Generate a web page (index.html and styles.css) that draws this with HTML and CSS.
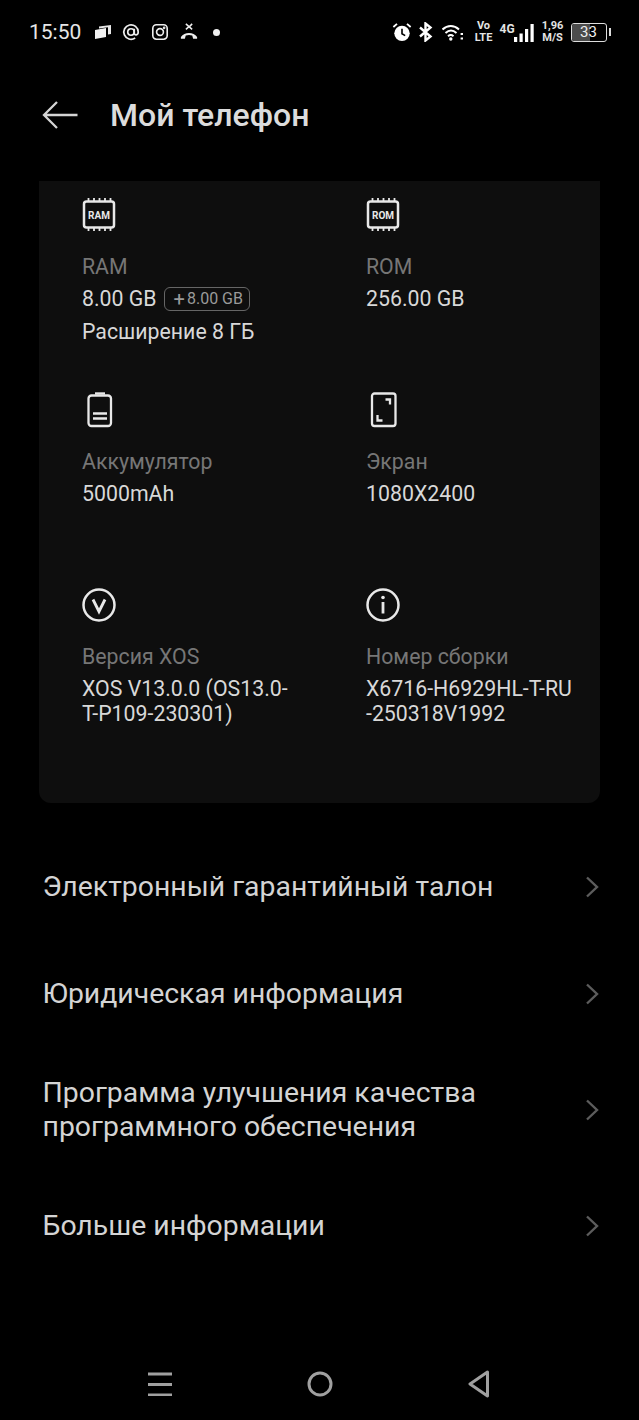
FILE: index.html
```html
<!DOCTYPE html>
<html lang="ru">
<head>
<meta charset="utf-8">
<title>Мой телефон</title>
<link rel="stylesheet" href="styles.css">
</head>
<body>
<div class="page">
  <div class="status">
    <div class="status-left">
      <span class="time">15:50</span>
      <svg class="ic-cards" viewBox="0 0 18 16"><path d="M1 6l11-2v9l-11 2z" fill="#f2f2f2"/><path d="M5 2.500l12-1.600v9l-3 .5V3.200l-9 1.200z" fill="#e8e8e8"/></svg>
      <svg class="ic-s" viewBox="0 0 20 20" fill="none" stroke="#eee" stroke-width="1.900"><circle cx="10" cy="10" r="3.600"/><path d="M13.600 6.400v5c0 2.600 4.400 2.600 4.400-1.400a8 8 0 1 0-3.400 6.600"/></svg>
      <svg class="ic-s" viewBox="0 0 20 20" fill="none" stroke="#eee" stroke-width="1.800"><rect x="2" y="2" width="16" height="16" rx="4"/><circle cx="10" cy="10" r="3.800"/><circle cx="14.600" cy="5.400" r=".6" fill="#eee"/></svg>
      <svg class="ic-s" viewBox="0 0 20 20" fill="none" stroke="#eee"><path d="M6.500 1l7 6M13.500 1l-3 3" stroke-width="1.700"/><path d="M6.500 7l3.500-3" stroke-width="1.700"/><path d="M1 15.500c4-6 14-6 18 0v2h-4.400l-1-3.500c-2.400-.8-4.800-.8-7.200 0l-1 3.500H1z" fill="#eee" stroke="none"/></svg>
      <span class="dot"></span>
    </div>
    <div class="status-right">
      <svg class="ic-alarm" viewBox="0 0 22 22"><path d="M1.500 5.500L5.500 2M20.500 5.500L16.500 2" stroke="#fff" stroke-width="2" fill="none"/><circle cx="11" cy="12.500" r="8.500" fill="#fff"/><path d="M11 7.500v5.500l3.500 2" stroke="#000" stroke-width="1.800" fill="none"/></svg>
      <svg class="ic-bt" viewBox="0 0 15 20" fill="none" stroke="#fff" stroke-width="2.400"><path d="M2 5.500l10.500 9L7.500 18.500v-17l5 4-10.500 9"/></svg>
      <svg class="ic-wifi" viewBox="0 0 21 18" fill="none" stroke="#fff" stroke-width="2"><path d="M.5 6.500c5-4.600 11.500-4.600 16.500 0M3.500 10c3.400-3 7.600-3 11 0M6 13.200c1.800-1.500 3.700-1.500 5.500 0"/><circle cx="8.800" cy="16" r="1.700" fill="#fff" stroke="none"/><path d="M19.800 10v2M19.800 14.500v2" stroke-width="2.400"/></svg>
      <span class="mini volte"><span class="mini-line">Vo</span><span class="mini-line">LTE</span></span>
      <span class="signal">
        <span class="mini g4">4G</span>
        <svg class="ic-bars" viewBox="0 0 20 18" fill="#fff"><rect x="0" y="13" width="3.200" height="5"/><rect x="5.500" y="9.500" width="3.200" height="8.500"/><rect x="11" y="5" width="3.200" height="13"/><rect x="16.500" y="0" width="3.200" height="18"/></svg>
      </span>
      <span class="mini speed"><span class="mini-line">1,96</span><span class="mini-line">M/S</span></span>
      <span class="battery"><span class="batt-body"><span class="batt-fill"></span><span class="batt-num">33</span></span><span class="batt-tip"></span></span>
    </div>
  </div>

  <header class="head">
    <svg class="back" viewBox="0 0 36 30" fill="none" stroke="#d4d4d4" stroke-width="2.300"><path d="M35.500 15H3M15 2L2 15l13 13"/></svg>
    <h1 class="title">Мой телефон</h1>
  </header>

  <section class="card">
    <div class="spec">
      <svg class="icon" viewBox="0 0 36 36" fill="none" stroke="#e8e8e8"><rect x="3" y="4.500" width="30" height="26" rx="2.500" stroke-width="2.500"/><path d="M7.500 1v3M13 1v3M18.500 1v3M24 1v3M29.500 1v3M7.500 31v3M13 31v3M18.500 31v3M24 31v3M29.500 31v3" stroke-width="1.800"/><text x="18" y="21.500" class="chip">RAM</text></svg>
      <div class="label">RAM</div>
      <div class="value value-row"><span>8.00 GB</span><span class="tag"><span class="plus">+</span>8.00 GB</span></div>
      <div class="value ext">Расширение 8 ГБ</div>
    </div>
    <div class="spec">
      <svg class="icon" viewBox="0 0 36 36" fill="none" stroke="#e8e8e8"><rect x="3" y="4.500" width="30" height="26" rx="2.500" stroke-width="2.500"/><path d="M7.500 1v3M13 1v3M18.500 1v3M24 1v3M29.500 1v3M7.500 31v3M13 31v3M18.500 31v3M24 31v3M29.500 31v3" stroke-width="1.800"/><text x="18" y="21.500" class="chip">ROM</text></svg>
      <div class="label">ROM</div>
      <div class="value">256.00 GB</div>
    </div>
    <div class="spec">
      <svg class="icon" viewBox="0 0 36 36" fill="none" stroke="#e8e8e8"><rect x="7.500" y="3.500" width="22.500" height="30.500" rx="3" stroke-width="2.300"/><path d="M14 1.500h10" stroke-width="2.400"/><path d="M12 21.500h14M12 26.500h14" stroke-width="2.300"/></svg>
      <div class="label">Аккумулятор</div>
      <div class="value">5000mAh</div>
    </div>
    <div class="spec">
      <svg class="icon" viewBox="0 0 36 36" fill="none" stroke="#e8e8e8" stroke-width="2.300"><rect x="7" y="1.500" width="23.500" height="32.500" rx="2.500"/><path d="M20.500 7.500h4.500v5M12.500 23v5.500h5"/></svg>
      <div class="label">Экран</div>
      <div class="value">1080X2400</div>
    </div>
    <div class="spec">
      <svg class="icon" viewBox="0 0 36 36" fill="none" stroke="#e8e8e8" stroke-width="2.500"><circle cx="18" cy="18" r="15.500"/><path d="M12 12.500l6 12 6-12" stroke-width="2.800"/></svg>
      <div class="label">Версия XOS</div>
      <div class="value lines">XOS V13.0.0 (OS13.0-<br>T-P109-230301)</div>
    </div>
    <div class="spec">
      <svg class="icon" viewBox="0 0 36 36" fill="none" stroke="#e8e8e8" stroke-width="2.500"><circle cx="18" cy="18" r="15.500"/><path d="M18 15v11.500" stroke-width="2.800"/><circle cx="18" cy="10.500" r="1.800" fill="#e8e8e8" stroke="none"/></svg>
      <div class="label">Номер сборки</div>
      <div class="value lines">X6716-H6929HL-T-RU<br>-250318V1992</div>
    </div>
  </section>

  <nav class="menu">
    <a class="row r1"><span>Электронный гарантийный талон</span><svg class="chev" viewBox="0 0 14 22" fill="none" stroke="#5c5c5c" stroke-width="2.400"><path d="M2 1.500L12 11 2 20.500"/></svg></a>
    <a class="row r2"><span>Юридическая информация</span><svg class="chev" viewBox="0 0 14 22" fill="none" stroke="#5c5c5c" stroke-width="2.400"><path d="M2 1.500L12 11 2 20.500"/></svg></a>
    <a class="row r3"><span>Программа улучшения качества<br>программного обеспечения</span><svg class="chev" viewBox="0 0 14 22" fill="none" stroke="#5c5c5c" stroke-width="2.400"><path d="M2 1.500L12 11 2 20.500"/></svg></a>
    <a class="row r4"><span>Больше информации</span><svg class="chev" viewBox="0 0 14 22" fill="none" stroke="#5c5c5c" stroke-width="2.400"><path d="M2 1.500L12 11 2 20.500"/></svg></a>
  </nav>

  <div class="sysnav">
    <svg class="nav-menu" viewBox="0 0 24 24" fill="none" stroke="#a0a0a0" stroke-width="3"><path d="M0 2h24M0 12.500h24M0 23h24"/></svg>
    <svg class="nav-home" viewBox="0 0 26 26" fill="none" stroke="#a0a0a0" stroke-width="3"><circle cx="13" cy="13" r="11"/></svg>
    <svg class="nav-back" viewBox="0 0 22 28" fill="none" stroke="#a0a0a0" stroke-width="3" stroke-linejoin="round"><path d="M19.500 2L2 14l17.500 12z"/></svg>
  </div>
</div>
</body>
</html>
```

FILE: styles.css
```css
* { box-sizing: border-box; }
html, body { margin: 0; padding: 0; background: #000; }
body { font-family: Roboto, "Noto Sans", sans-serif; color: #e6e6e6; }
.page { width: 639px; height: 1420px; display: flex; flex-direction: column; overflow: hidden; }

.status { height: 64px; display: flex; justify-content: space-between; align-items: center; padding: 0 28px 0 29px; }
.status-left, .status-right { display: flex; align-items: center; }
.time { font-size: 21px; color: #e6e6e6; width: 52px; margin-right: 13px; }
.ic-cards { width: 18px; height: 16px; margin-right: 10px; }
.ic-s { width: 18px; height: 18px; margin-right: 11px; }
.dot { width: 7px; height: 7px; border-radius: 50%; background: #f0f0f0; margin-left: 4px; }
.ic-alarm { width: 20px; height: 20px; margin-right: 6px; }
.ic-bt { width: 15px; height: 20px; margin-right: 9px; }
.ic-wifi { width: 21px; height: 18px; margin-right: 12px; }
.mini { font-size: 11px; line-height: 12px; font-weight: 700; color: #e4e4e4; text-align: center; white-space: nowrap; }
.mini-line { display: block; }
.volte { width: 18px; margin-right: 7px; display: flex; flex-direction: column; align-items: center; }
.signal { display: flex; align-items: flex-end; height: 19px; margin-right: 9px; }
.g4 { align-self: flex-start; width: 15px; margin-right: -1px; font-size: 12px; }
.ic-bars { width: 20px; height: 18px; }
.speed { width: 20px; margin-right: 8px; display: flex; flex-direction: column; align-items: center; }
.battery { display: flex; align-items: center; }
.batt-body { width: 36px; height: 19px; border: 1.500px solid #ddd; border-radius: 3px; display: flex; align-items: center; justify-content: center; position: relative; overflow: hidden; }
.batt-fill { position: absolute; left: 0; top: 0; bottom: 0; width: 18px; background: #4c4c4c; }
.batt-num { position: relative; font-size: 15px; color: #eee; }
.batt-tip { width: 2.500px; height: 8px; background: #ddd; margin-left: 2px; }

.head { height: 102px; display: flex; align-items: center; padding-left: 42px; }
.back { width: 36px; height: 30px; margin-right: 32px; }
.title { margin: 0; font-size: 32px; font-weight: 500; color: #dcdcdc; }

.card { margin: 15px 39px 0; height: 622px; background: #0e0e0e; border-radius: 0 0 12px 12px; display: grid; grid-template-columns: 284px 1fr; grid-auto-rows: 195px; padding: 16px 0 0 43px; align-content: start; }
.spec { min-width: 0; }
.icon { width: 36px; height: 36px; display: block; margin-left: -1px; margin-bottom: 22px; }
.chip { font: 700 10px Roboto, sans-serif; fill: #e8e8e8; stroke: none; text-anchor: middle; }
.label { font-size: 21.300px; line-height: 24px; color: #767676; margin-bottom: 7px; }
.value { font-size: 21.300px; line-height: 25px; color: #d8d8d8; }
.value-row { display: flex; align-items: center; gap: 7px; }
.tag { height: 24px; border: 1.500px solid #666; border-radius: 6px; font-size: 16px; color: #9a9a9a; padding: 0 6px 0 9px; display: flex; align-items: center; }
.plus { margin-right: 2px; font-size: 20px; line-height: 20px; }
.ext { margin-top: 8px; }

.menu { display: flex; flex-direction: column; margin-top: 50px; padding: 0 40px 0 42.500px; }
.row { display: flex; justify-content: space-between; align-items: center; font-size: 28.400px; line-height: 34px; color: #d4d4d4; }
.r1, .r2, .r3, .r4 { height: 68px; }
.r2 { margin-top: 39px; }
.r3 { margin-top: 48px; }
.r4 { margin-top: 48px; }
.chev { width: 14px; height: 22px; flex: none; }

.sysnav { margin-top: auto; height: 72px; display: flex; align-items: center; padding-left: 148px; }
.nav-menu { width: 24px; height: 24px; margin-right: 135px; }
.nav-home { width: 26px; height: 26px; margin-right: 135px; }
.nav-back { width: 22px; height: 28px; }
```
